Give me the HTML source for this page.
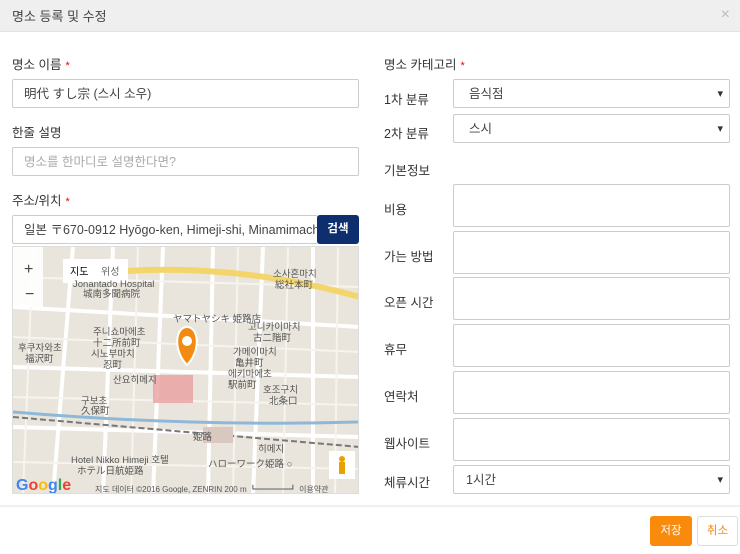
<!DOCTYPE html>
<html><head><meta charset="utf-8"><style>
*{box-sizing:border-box;margin:0;padding:0}
body{width:740px;height:554px;background:#fff;font-family:"Liberation Sans","Noto Sans CJK KR",sans-serif;font-size:12px;color:#333;position:relative;overflow:hidden}
.hdr{position:absolute;left:0;top:0;width:740px;height:32px;background:#efefef;border-bottom:1px solid #e2e2e2}
.hdr span{position:absolute;left:12px;top:6px;font-size:13px;color:#444}
.hdr b{position:absolute;right:10px;top:6px;font-weight:normal;color:#bbb;font-size:16px}
.lb{position:absolute;font-size:12.5px;color:#333}
.lb i{color:#e00;font-style:normal;font-size:11px;margin-left:4px}
.in{position:absolute;border:1px solid #ccc;border-radius:2px;background:#fff;padding:0 11px;line-height:28px;font-size:12.5px;color:#444;white-space:nowrap;overflow:hidden}
.ph{color:#aaa}
.sel::after{content:"▾";position:absolute;right:6px;top:0;font-size:11px;color:#333}
.btn{position:absolute;border-radius:3px;text-align:center;font-size:11.5px}
</style></head><body>
<div class="hdr"><span>명소 등록 및 수정</span><b>×</b></div>

<div class="lb" style="left:12px;top:54px">명소 이름<i>*</i></div>
<div class="in" style="left:12px;top:79px;width:347px;height:29px">明代 すし宗 (스시 소우)</div>
<div class="lb" style="left:12px;top:122px">한줄 설명</div>
<div class="in ph" style="left:12px;top:147px;width:347px;height:29px">명소를 한마디로 설명한다면?</div>
<div class="lb" style="left:12px;top:190px">주소/위치<i>*</i></div>
<div class="in" style="left:12px;top:215px;width:306px;height:29px">일본 〒670-0912 Hyōgo-ken, Himeji-shi, Minamimachi</div>
<div class="btn" style="left:317px;top:215px;width:42px;height:29px;background:#0d2f6e;color:#fff;line-height:29px;font-weight:bold">검색</div>

<div style="position:absolute;left:12px;top:246px;width:347px;height:248px;background:#e9e5dc;overflow:hidden;border:1px solid #ddd">
<svg width="347" height="248" viewBox="0 0 347 248">
<g stroke="#fff" stroke-width="4" fill="none">
<path d="M0 60 L347 80"/><path d="M0 120 L347 130"/><path d="M60 0 L40 248"/><path d="M150 0 L140 248"/><path d="M250 0 L240 248"/><path d="M0 180 L347 190"/><path d="M100 0 L90 248"/><path d="M200 0 L195 248"/><path d="M300 0 L300 248"/>
</g>
<g stroke="#f6f4ef" stroke-width="2" fill="none">
<path d="M0 30 L347 40"/><path d="M0 90 L347 105"/><path d="M0 150 L347 158"/><path d="M0 215 L347 222"/><path d="M20 0 L10 248"/><path d="M125 0 L118 248"/><path d="M225 0 L220 248"/><path d="M275 0 L270 248"/><path d="M325 0 L322 248"/>
</g>
<path d="M100 25 Q220 15 347 50" stroke="#f4d56a" stroke-width="6" fill="none"/>
<path d="M0 165 Q180 180 347 175" stroke="#8fb8d8" stroke-width="3" fill="none"/>
<path d="M0 170 L347 200" stroke="#777" stroke-width="2" stroke-dasharray="6 3" fill="none"/>
<rect x="140" y="128" width="40" height="28" fill="#e8a0a0" opacity=".8"/>
<rect x="190" y="180" width="30" height="16" fill="#d8c8c0"/>
<rect x="0" y="0" width="30" height="60" fill="#fff" opacity=".9"/>
<text x="11" y="27" font-size="16" fill="#444">+</text><text x="12" y="52" font-size="16" fill="#444">−</text>
<rect x="50" y="12" width="65" height="24" fill="#fff"/>
<text x="57" y="28" font-size="10" fill="#000">지도</text><text x="88" y="28" font-size="10" fill="#666">위성</text>
<g font-size="9.5" fill="#555" font-family="Liberation Sans,Noto Sans CJK JP,sans-serif">
<text x="60" y="40">Jonantado Hospital</text><text x="70" y="50">城南多聞病院</text>
<text x="260" y="30">소사혼마치</text><text x="262" y="41">総社本町</text>
<text x="160" y="75">ヤマトヤシキ 姫路店</text>
<text x="80" y="88">주니쇼마에초</text><text x="80" y="99">十二所前町</text><text x="78" y="110">시노부마치</text><text x="90" y="121">忍町</text>
<text x="235" y="83">고니카이마치</text><text x="240" y="94">古二階町</text>
<text x="5" y="104">후쿠자와초</text><text x="12" y="115">福沢町</text>
<text x="220" y="108">가메이마치</text><text x="222" y="119">亀井町</text>
<text x="100" y="136">산요히메지</text><text x="215" y="130">에키마에초</text><text x="215" y="141">駅前町</text>
<text x="250" y="146">호조구치</text><text x="256" y="157">北条口</text>
<text x="68" y="157">구보초</text><text x="68" y="167">久保町</text>
<text x="245" y="205">히메지</text><text x="180" y="193">姫路</text>
<text x="58" y="216">Hotel Nikko Himeji 호텔</text><text x="64" y="227">ホテル日航姫路</text>
<text x="195" y="220">ハローワーク姫路 ○</text>
<text x="82" y="245" font-size="8">지도 데이터 ©2016 Google, ZENRIN   200 m ┗━━━━┛   이용약관</text>
</g>
<text x="3" y="243" font-size="16" font-weight="bold"><tspan fill="#4285f4">G</tspan><tspan fill="#ea4335">o</tspan><tspan fill="#fbbc05">o</tspan><tspan fill="#4285f4">g</tspan><tspan fill="#34a853">l</tspan><tspan fill="#ea4335">e</tspan></text>
<rect x="316" y="204" width="26" height="28" fill="#fff"/><circle cx="329" cy="212" r="3" fill="#e8a200"/><rect x="326" y="215" width="6" height="12" fill="#e8a200"/>
<path d="M174 118 C160 104 162 80 174 80 C186 80 188 104 174 118Z" fill="#f28b10" stroke="#fff" stroke-width="2"/><circle cx="174" cy="94" r="5" fill="#fff"/>
</svg></div>

<div class="lb" style="left:384px;top:54px">명소 카테고리<i>*</i></div>
<div class="lb" style="left:384px;top:89px">1차 분류</div>
<div class="in sel" style="left:453px;top:79px;width:277px;height:29px;padding-left:15px">음식점</div>
<div class="lb" style="left:384px;top:123px">2차 분류</div>
<div class="in sel" style="left:453px;top:114px;width:277px;height:29px;padding-left:15px">스시</div>
<div class="lb" style="left:384px;top:160px">기본정보</div>
<div class="lb" style="left:384px;top:199px">비용</div><div class="in" style="left:453px;top:184px;width:277px;height:43px"></div>
<div class="lb" style="left:384px;top:246px">가는 방법</div><div class="in" style="left:453px;top:231px;width:277px;height:43px"></div>
<div class="lb" style="left:384px;top:292px">오픈 시간</div><div class="in" style="left:453px;top:277px;width:277px;height:43px"></div>
<div class="lb" style="left:384px;top:339px">휴무</div><div class="in" style="left:453px;top:324px;width:277px;height:43px"></div>
<div class="lb" style="left:384px;top:386px">연락처</div><div class="in" style="left:453px;top:371px;width:277px;height:43px"></div>
<div class="lb" style="left:384px;top:433px">웹사이트</div><div class="in" style="left:453px;top:418px;width:277px;height:43px"></div>
<div class="lb" style="left:384px;top:472px">체류시간</div>
<div class="in sel" style="left:453px;top:465px;width:277px;height:29px;padding-left:12px">1시간</div>

<div style="position:absolute;left:0;top:505px;width:740px;height:2px;background:#f0f0f0"></div>
<div class="btn" style="left:650px;top:516px;width:42px;height:30px;line-height:30px;background:#f98a0c;color:#fff">저장</div>
<div class="btn" style="left:697px;top:516px;width:41px;height:30px;line-height:28px;border:1px solid #ddd;color:#f98a0c">취소</div>
</body></html>
